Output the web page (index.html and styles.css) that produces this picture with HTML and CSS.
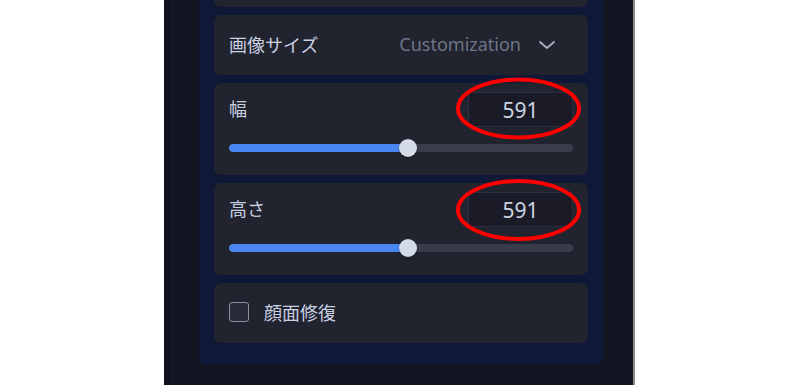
FILE: index.html
```html
<!DOCTYPE html>
<html lang="ja">
<head>
<meta charset="utf-8">
<title>Settings</title>
<link rel="stylesheet" href="styles.css">
</head>
<body>
<div class="page">
  <div class="gutter"></div>
  <div class="panel">
    <div class="edge"></div>
    <div class="group">
      <div class="card stub"></div>
      <div class="card row">
        <span class="label">画像サイズ</span>
        <div class="select">
          <span class="select-value">Customization</span>
          <svg class="chevron" width="16" height="8" viewBox="0 0 16 8"><path d="M1 1 L8 7 L15 1" fill="none" stroke="#a9b1c1" stroke-width="1.8" stroke-linecap="round" stroke-linejoin="round"/></svg>
        </div>
      </div>
      <div class="card slider-card">
        <div class="slider-head">
          <span class="label">幅</span>
          <div class="num">591</div>
        </div>
        <div class="slider">
          <div class="track"><div class="fill" style="width:52%"></div></div>
          <div class="thumb" style="left:calc(52% - 9px)"></div>
        </div>
      </div>
      <div class="card slider-card">
        <div class="slider-head">
          <span class="label">高さ</span>
          <div class="num">591</div>
        </div>
        <div class="slider">
          <div class="track"><div class="fill" style="width:52%"></div></div>
          <div class="thumb" style="left:calc(52% - 9px)"></div>
        </div>
      </div>
      <div class="card row check-row">
        <span class="checkbox"></span>
        <span class="label">顔面修復</span>
      </div>
    </div>
  </div>
  <div class="divider"></div>
</div>
<svg class="marks" width="800" height="385" viewBox="0 0 800 385">
  <ellipse cx="518.5" cy="108.5" rx="60.5" ry="29" fill="none" stroke="#ff0000" stroke-width="4"/>
  <ellipse cx="518.5" cy="210" rx="60.5" ry="29" fill="none" stroke="#ff0000" stroke-width="4"/>
</svg>
</body>
</html>
```
FILE: styles.css
```css
html, body {
  margin: 0;
  padding: 0;
  background: #ffffff;
  width: 800px;
  height: 385px;
  overflow: hidden;
}
body {
  position: relative;
  font-family: "Noto Sans", "Noto Sans CJK JP", sans-serif;
}
.page {
  display: flex;
  height: 385px;
}
.gutter {
  width: 164px;
  flex: none;
}
.panel {
  width: 469px;
  flex: none;
  background: #131523;
  display: flex;
  align-items: flex-start;
}
.edge {
  width: 6px;
  height: 100%;
  background: #0f111b;
  flex: none;
}
.divider {
  width: 2px;
  background: #8c8c8c;
  flex: none;
}
.group {
  margin-left: 29px;
  width: 404px;
  box-sizing: border-box;
  padding: 0 15px 22px;
  background: #0f1937;
  border-radius: 0 0 8px 8px;
  display: flex;
  flex-direction: column;
  gap: 8px;
}
.card {
  background: #21232f;
  border-radius: 7px;
  box-sizing: border-box;
}
.stub {
  height: 7px;
  border-radius: 0 0 7px 7px;
}
.row {
  height: 60px;
  display: flex;
  align-items: center;
  justify-content: space-between;
  padding: 0 15px;
}
.label {
  font-family: "Noto Sans CJK JP", sans-serif;
  font-size: 18px;
  color: #c8d0e2;
  line-height: 1;
  margin-top: -3px;
}
.select {
  display: flex;
  align-items: center;
  gap: 18px;
  margin-right: 18px;
}
.select-value {
  font-family: "Noto Sans", sans-serif;
  font-size: 18px;
  color: #6e7586;
  margin-top: -2px;
}
.chevron {
  display: block;
}
.slider-card {
  height: 92px;
  padding: 9px 15px 0;
}
.slider-head {
  display: flex;
  align-items: center;
  justify-content: space-between;
  height: 35px;
}
.num {
  width: 105px;
  height: 35px;
  box-sizing: border-box;
  border: 1px solid #2b2f3f;
  background: #1a1b27;
  color: #cdd4e0;
  font-family: "Noto Sans", sans-serif;
  font-size: 21px;
  display: flex;
  align-items: center;
  justify-content: center;
}
.slider {
  position: relative;
  margin-top: 12px;
  height: 18px;
  display: flex;
  align-items: center;
}
.track {
  width: 100%;
  height: 8px;
  border-radius: 4px;
  background: #393c4a;
  overflow: hidden;
}
.fill {
  height: 100%;
  background: #4a87f2;
  border-radius: 4px;
}
.thumb {
  position: absolute;
  top: 0;
  width: 18px;
  height: 18px;
  border-radius: 50%;
  background: #d3dbe6;
  box-shadow: 0 1px 2px rgba(0,0,0,0.4);
}
.check-row {
  justify-content: flex-start;
  gap: 15px;
}
.checkbox {
  width: 20px;
  height: 20px;
  box-sizing: border-box;
  border: 1px solid #8b909c;
  border-radius: 3px;
  background: #262b37;
  margin-top: -2px;
}
.marks {
  position: absolute;
  left: 0;
  top: 0;
  pointer-events: none;
}
```
